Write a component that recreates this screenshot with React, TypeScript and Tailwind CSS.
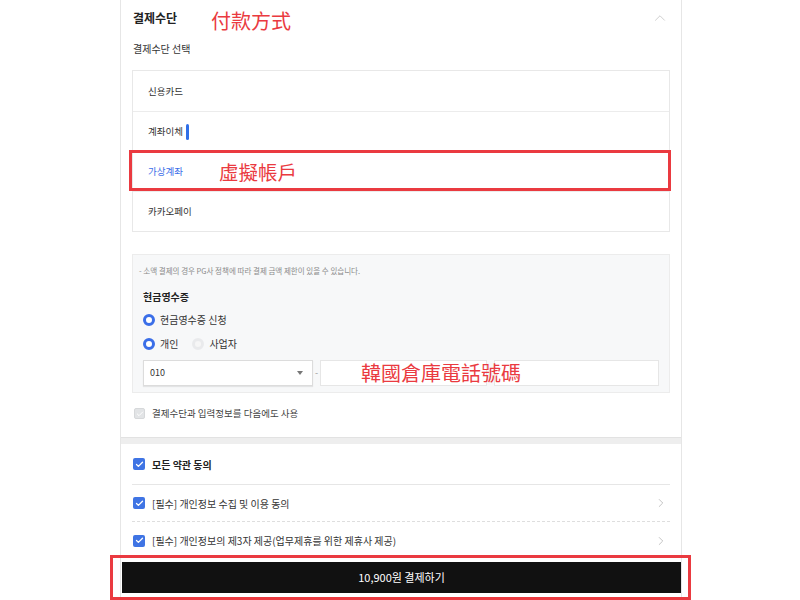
import { ChevronUp, ChevronRight, Check } from 'lucide-react';

const KR = "font-['Noto_Sans_CJK_KR','Noto_Sans',sans-serif]";
const TC = "font-['Noto_Sans_CJK_TC','Noto_Sans_CJK_SC',sans-serif]";

const METHODS = ['신용카드', '계좌이체', '가상계좌', '카카오페이'];

function Radio({ on }: { on: boolean }) {
  return on ? (
    <span className="block w-[12px] h-[12px] rounded-full border-[3px] border-[#3a6ee8] bg-white shrink-0" />
  ) : (
    <span className="block w-[12px] h-[12px] rounded-full border-[3px] border-[#e9eaec] bg-[#f6f6f6] shrink-0" />
  );
}

function BlueCheck() {
  return (
    <span className="w-[12px] h-[12px] rounded-[2px] bg-[#3f74e4] flex items-center justify-center shrink-0">
      <Check size={9} strokeWidth={3.5} color="#fff" />
    </span>
  );
}

export default function App() {
  return (
    <div className={`relative w-[800px] h-[600px] bg-white overflow-hidden ${KR}`}>
      <div className="ml-[120px] w-[562px] h-full border-x border-[#e6e6e6] flex flex-col">
        <div className="px-[11px]">
          <div className="h-[36px] flex items-center justify-between">
            <span className="text-[12px] font-bold text-[#222] pl-px">결제수단</span>
            <ChevronUp size={18} strokeWidth={1.2} color="#c9c9c9" className="mr-[1px]" />
          </div>
          <div className="h-[24px] flex items-center text-[10px] text-[#333] pl-px">결제수단 선택</div>

          <div className="mt-[10px] border border-[#e8e8e8] flex flex-col">
            {METHODS.map((m, i) => (
              <div
                key={m}
                className={`h-[40px] flex items-center pl-[15px] text-[9.5px] ${i > 0 ? 'border-t border-[#ececec]' : ''} ${i === 2 ? 'text-[#3a6ee8]' : 'text-[#333]'}`}
              >
                {m}
                {i === 1 && <span className="ml-[3px] w-[3px] h-[16px] rounded-full bg-[#2f6fe8]" />}
              </div>
            ))}
          </div>

          <div className="mt-[22px] h-[139px] border border-[#ececec] bg-[#f7f8f9] pl-[6px] pr-[10px] flex flex-col">
            <div className="mt-[10px] text-[7.5px] leading-[12px] text-[#8a8a8a]">
              - 소액 결제의 경우 PG사 정책에 따라 결제 금액 제한이 있을 수 있습니다.
            </div>
            <div className="mt-[13px] pl-[4px] text-[10px] font-bold leading-[14px] text-[#222]">현금영수증</div>
            <div className="mt-[9px] pl-[4px] flex items-center gap-[5px] text-[10px] leading-[14px] text-[#333]">
              <Radio on />
              현금영수증 신청
            </div>
            <div className="mt-[10px] pl-[4px] flex items-center text-[10px] leading-[14px] text-[#333]">
              <Radio on />
              <span className="ml-[5px]">개인</span>
              <span className="ml-[14px] flex"><Radio on={false} /></span>
              <span className="ml-[5px]">사업자</span>
            </div>
            <div className="mt-[9px] pl-[4px] flex items-center h-[26px]">
              <div className="w-[170px] h-full border border-[#dcdcdc] bg-white flex items-center justify-between pl-[6px] pr-[9px] text-[9px] text-[#333] shadow-[0_1px_1px_rgba(0,0,0,0.08)]">
                010
                <span className="w-0 h-0 border-x-[3px] border-x-transparent border-t-[4px] border-t-[#777]" />
              </div>
              <span className="w-[7px] text-center text-[9px] text-[#999]">-</span>
              <div className="w-[167px] h-full border border-[#e6e6e6] bg-white" />
              <div className="ml-[7px] flex-1 h-full border border-[#e6e6e6] bg-white" />
            </div>
          </div>

          <div className="h-[41px] flex items-center gap-[7px] pl-[2px] text-[9.5px] text-[#444]">
            <span className="w-[11px] h-[11px] rounded-[2px] bg-[#e2e4e6] border border-[#d6d8da] flex items-center justify-center">
              <Check size={8} strokeWidth={3} color="#fff" />
            </span>
            결제수단과 입력정보를 다음에도 사용
          </div>
        </div>

        <div className="mt-[3px] h-[7px] bg-[#eeeeee] border-t border-[#e2e2e2]" />

        <div className="px-[11px]">
          <div className="h-[41px] flex items-center gap-[7px] pl-[1px] text-[10px] font-bold text-[#222] border-b border-[#e6e6e6]">
            <BlueCheck />
            모든 약관 동의
          </div>
          <div className="h-[37px] flex items-center justify-between pl-[1px] text-[10px] text-[#333] border-b border-dashed border-[#dedede]">
            <span className="flex items-center gap-[7px]">
              <BlueCheck />
              [필수] 개인정보 수집 및 이용 동의
            </span>
            <ChevronRight size={14} strokeWidth={1.2} color="#aaa" className="mr-[2px]" />
          </div>
          <div className="h-[37px] flex items-center justify-between pl-[1px] text-[10px] text-[#333]">
            <span className="flex items-center gap-[7px]">
              <BlueCheck />
              [필수] 개인정보의 제3자 제공(업무제휴를 위한 제휴사 제공)
            </span>
            <ChevronRight size={14} strokeWidth={1.2} color="#aaa" className="mr-[2px]" />
          </div>
        </div>

        <div className="mt-[3px] ml-px h-[31px] bg-[#111] flex items-center justify-center text-[11px] text-white">
          10,900원 결제하기
        </div>
      </div>

      <span className={`absolute left-[211px] top-[8px] text-[20px] leading-[26px] text-[#ea3a40] ${TC}`}>付款方式</span>
      <div className="absolute left-[129px] top-[150px] w-[542px] h-[41px] border-[3px] border-[#ea3a40]" />
      <span className={`absolute left-[219px] top-[159px] text-[19.5px] leading-[26px] text-[#ea3a40] ${TC}`}>虛擬帳戶</span>
      <span className={`absolute left-[361px] top-[360px] text-[20px] leading-[26px] text-[#ea3a40] ${TC}`}>韓國倉庫電話號碼</span>
      <div className="absolute left-[110px] top-[555px] w-[581px] h-[45px] border-[3px] border-[#ea3a40]" />
    </div>
  );
}
